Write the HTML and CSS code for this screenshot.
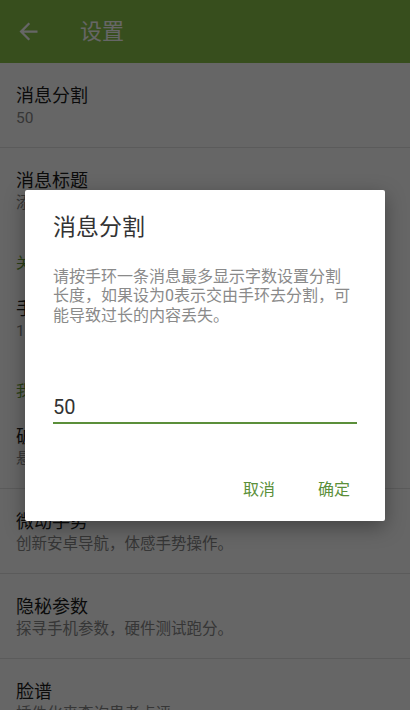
FILE: index.html
```html
<!DOCTYPE html>
<html lang="zh-CN">
<head>
    <meta charset="UTF-8">
    <meta name="viewport" content="width=device-width, initial-scale=1.0">
    <title>设置</title>
    <link rel="stylesheet" href="styles.css">
</head>
<body>
    <div class="toolbar">
        <svg class="back" viewBox="0 0 24 24"><path d="M20 11H7.83l5.59-5.59L12 4l-8 8 8 8 1.41-1.41L7.83 13H20v-2z"/></svg>
        <span class="toolbar-title">设置</span>
    </div>

    <div class="list">
        <div class="item divided">
            <div class="item-title">消息分割</div>
            <div class="item-sub">50</div>
        </div>
        <div class="item">
            <div class="item-title">消息标题</div>
            <div class="item-sub">添加自定义的消息标题</div>
        </div>
        <div class="category">关于手环</div>
        <div class="item">
            <div class="item-title">手环震动</div>
            <div class="item-sub">1</div>
        </div>
        <div class="category">我的其他应用</div>
        <div class="item divided">
            <div class="item-title">破解工具</div>
            <div class="item-sub">悬浮窗快速启动</div>
        </div>
        <div class="item divided">
            <div class="item-title">微动手势</div>
            <div class="item-sub">创新安卓导航，体感手势操作。</div>
        </div>
        <div class="item divided">
            <div class="item-title">隐秘参数</div>
            <div class="item-sub">探寻手机参数，硬件测试跑分。</div>
        </div>
        <div class="item">
            <div class="item-title">脸谱</div>
            <div class="item-sub">插件化来查询患者点评</div>
        </div>
    </div>

    <div class="overlay">
        <div class="dialog">
            <div class="dialog-title">消息分割</div>
            <p class="dialog-msg">请按手环一条消息最多显示字数设置分割<br>长度，如果设为0表示交由手环去分割，可<br>能导致过长的内容丢失。</p>
            <input class="dialog-input" type="text" value="50">
            <div class="dialog-actions">
                <span class="btn">取消</span>
                <span class="btn">确定</span>
            </div>
        </div>
    </div>
</body>
</html>
```

FILE: styles.css
```css
body {
    margin: 0;
    width: 410px;
    height: 710px;
    overflow: hidden;
    background: #ffffff;
    font-family: Roboto, "Noto Sans CJK SC", sans-serif;
    position: relative;
}

.toolbar {
    height: 63px;
    background: #8bc34a;
    display: flex;
    align-items: center;
    padding-left: 15px;
    box-sizing: border-box;
}

.back {
    width: 27px;
    height: 27px;
    fill: #ffffff;
}

.toolbar-title {
    margin-left: 38px;
    color: #ffffff;
    font-size: 22px;
    line-height: 28px;
}

.list {
    display: flex;
    flex-direction: column;
}

.item {
    height: 85px;
    padding: 21px 16px 0;
    box-sizing: border-box;
}

.item.divided {
    border-bottom: 1px solid #e4e4e4;
}

.item-title {
    font-size: 18px;
    line-height: 24px;
    color: #1c1c1c;
}

.item-sub {
    font-size: 15.5px;
    line-height: 20px;
    color: #888888;
    white-space: nowrap;
}

.category {
    height: 43px;
    padding: 20px 16px 0;
    box-sizing: border-box;
    font-size: 15px;
    line-height: 20px;
    color: #689f38;
}

.overlay {
    position: absolute;
    inset: 0;
    background: rgba(0, 0, 0, 0.6);
    display: flex;
    justify-content: center;
    align-items: center;
}

.dialog {
    width: 360px;
    height: 331px;
    background: #ffffff;
    border-radius: 2px;
    box-shadow: 0 6px 20px rgba(0, 0, 0, 0.35);
    padding: 24px 28px 21px;
    box-sizing: border-box;
    display: flex;
    flex-direction: column;
}

.dialog-title {
    font-size: 23px;
    line-height: 28px;
    color: #333333;
}

.dialog-msg {
    margin: 25px 0 0;
    font-size: 16px;
    line-height: 19.5px;
    color: #8a8a8a;
}

.dialog-input {
    margin-top: 70px;
    width: 100%;
    box-sizing: border-box;
    border: 0;
    border-bottom: 2px solid #5b8f3a;
    padding: 0 0 3px;
    outline: none;
    background: transparent;
    font-family: Roboto, "Noto Sans CJK SC", sans-serif;
    font-size: 20px;
    line-height: 24px;
    height: 29px;
    color: #333333;
}

.dialog-actions {
    margin-top: auto;
    display: flex;
    justify-content: flex-end;
    gap: 43px;
    padding-right: 7px;
}

.btn {
    font-size: 16px;
    line-height: 20px;
    color: #5b8f3a;
}
```
